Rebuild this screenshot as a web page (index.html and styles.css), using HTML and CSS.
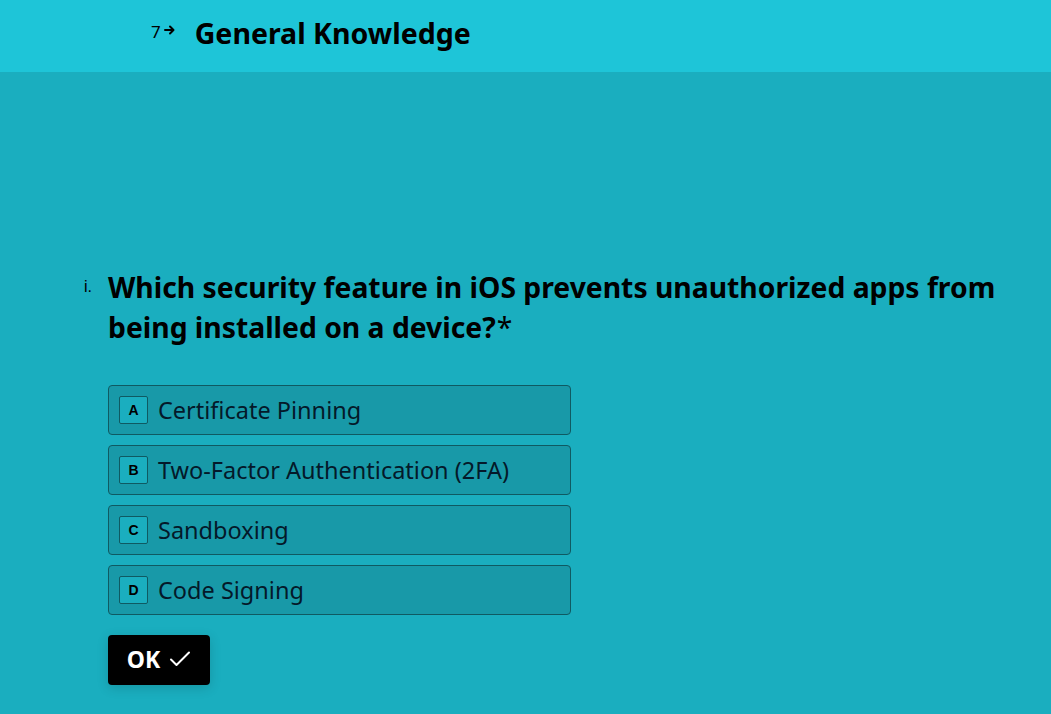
FILE: index.html
```html
<!DOCTYPE html>
<html>
<head>
<meta charset="utf-8">
<link rel="stylesheet" href="styles.css">
</head>
<body>
<header class="topbar">
  <div class="crumb">
    <span class="num">7</span>
    <svg class="arrow" width="12" height="12" viewBox="0 0 12 12"><path d="M1 6h8M6 2.5L9.5 6 6 9.5" stroke="#000" stroke-width="2" fill="none" stroke-linecap="round" stroke-linejoin="round"/></svg>
    <h1 class="title">General Knowledge</h1>
  </div>
</header>
<main class="content">
  <div class="question">
    <span class="qnum">i.</span>
    <h2 class="qtext">Which security feature in iOS prevents unauthorized apps from being installed on a device?<span class="req">*</span></h2>
  </div>
  <div class="options">
    <div class="option"><span class="key">A</span><span class="label">Certificate Pinning</span></div>
    <div class="option"><span class="key">B</span><span class="label">Two-Factor Authentication (2FA)</span></div>
    <div class="option"><span class="key">C</span><span class="label">Sandboxing</span></div>
    <div class="option"><span class="key">D</span><span class="label">Code Signing</span></div>
  </div>
  <button class="ok"><span>OK</span><svg width="22" height="18" viewBox="0 0 22 18"><path d="M2 9.5l5.5 5.5L20 2.5" stroke="#fff" stroke-width="2" fill="none" stroke-linecap="round" stroke-linejoin="round"/></svg></button>
</main>
</body>
</html>
```
FILE: styles.css
```css
* { box-sizing: border-box; }
html, body { margin: 0; padding: 0; }
body {
  background: #1aaebf;
  font-family: "Noto Sans", "Open Sans", sans-serif;
  color: #000;
  width: 1051px;
  height: 714px;
  overflow: hidden;
}
.topbar {
  background: #1ec5d8;
  height: 72px;
  display: flex;
  align-items: center;
  padding-left: 151px;
  padding-bottom: 6px;
}
.crumb { display: flex; align-items: center; }
.num { font-size: 17px; line-height: 1; margin-top: -4px; }
.arrow { margin-left: 3px; margin-top: -7px; }
.title {
  margin: 0 0 0 19px;
  font-size: 28.5px;
  font-weight: 700;
  line-height: 1;
}
.content {
  padding: 195px 0 0 84px;
}
.question { display: flex; align-items: flex-start; }
.qnum { width: 24px; font-size: 16px; line-height: 1; padding-top: 12px; font-family: "Liberation Sans", sans-serif; }
.qtext {
  margin: 0;
  font-size: 28.3px;
  font-weight: 700;
  line-height: 40px;
  width: 920px;
}
.req { font-weight: 400; margin-left: 1px; }
.options {
  margin: 38px 0 0 24px;
  display: flex;
  flex-direction: column;
  gap: 10px;
  width: 463px;
}
.option {
  height: 50px;
  background: #1899a8;
  border: 1px solid #0f5a62;
  border-radius: 4px;
  display: flex;
  align-items: center;
  padding-left: 10px;
}
.key {
  width: 29px;
  height: 28px;
  border: 1px solid #0f5a62;
  border-radius: 2px;
  background: #1aaebf;
  display: flex;
  align-items: center;
  justify-content: center;
  font-family: "Liberation Sans", sans-serif;
  font-weight: 700;
  font-size: 14px;
}
.label {
  margin-left: 10px;
  font-size: 23.5px;
  color: #04192a;
}
.ok {
  margin: 20px 0 0 24px;
  height: 50px;
  width: 102px;
  background: #000;
  color: #fff;
  border: none;
  border-radius: 4px;
  font-family: "Noto Sans", sans-serif;
  font-size: 23px;
  font-weight: 700;
  display: flex;
  align-items: center;
  justify-content: center;
  gap: 9px;
  box-shadow: 0 3px 12px rgba(0,0,0,0.15);
  padding: 0 0 2px 0;
}
```
